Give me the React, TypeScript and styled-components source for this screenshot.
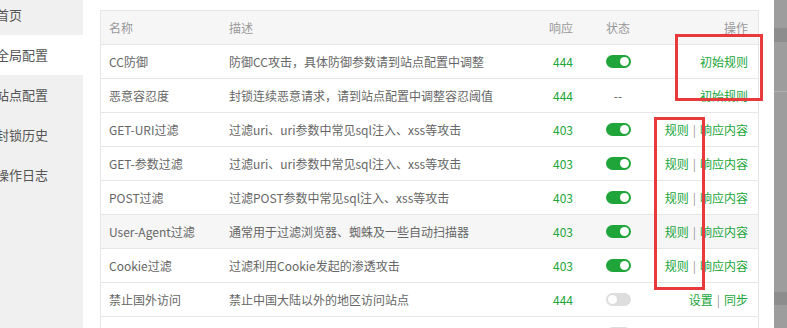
import React from 'react'
import styled, { createGlobalStyle } from 'styled-components'

const GlobalStyle = createGlobalStyle`
  html, body {
    margin: 0;
    padding: 0;
    background: #fff;
    overflow: hidden;
  }
  body {
    font-family: 'Noto Sans CJK SC', 'Noto Sans', sans-serif;
    font-size: 12px;
    color: #666;
  }
`

const green = '#20a53a'

const Page = styled.div`
  display: flex;
  width: 787px;
  height: 328px;
  overflow: hidden;
  position: relative;
`
const Sidebar = styled.ul`
  list-style: none;
  margin: 0;
  padding: 0;
  width: 83px;
  flex: none;
  background: #f0f0f0;
  padding-top: 0;
  margin-top: -5px;
`
const SideItem = styled.li<{ $active?: boolean }>`
  height: 40px;
  line-height: 40px;
  font-size: 13px;
  color: #555;
  white-space: nowrap;
  text-indent: -4px;
  background: ${(p) => (p.$active ? '#fff' : 'transparent')};
`
const Main = styled.div`
  flex: 1;
  padding: 10px 15px 0 17px;
`
const Table = styled.div`
  border: 1px solid #e6e6e6;
  border-bottom: none;
`
const Row = styled.div<{ $head?: boolean; $shade?: boolean }>`
  display: grid;
  grid-template-columns: 120px 302px 60px 70px 1fr;
  height: 33px;
  align-items: center;
  border-top: ${(p) => (p.$head ? 'none' : '1px solid #e6e6e6')};
  background: ${(p) => (p.$head || p.$shade ? '#f6f6f7' : '#fff')};
  color: ${(p) => (p.$head ? '#999' : '#666')};
  white-space: nowrap;
`
const Cell = styled.div<{ $align?: 'left' | 'right' | 'center' }>`
  padding: 0 8px;
  text-align: ${(p) => p.$align || 'left'};
  overflow: hidden;
  display: flex;
  justify-content: ${(p) =>
    p.$align === 'right' ? 'flex-end' : p.$align === 'center' ? 'center' : 'flex-start'};
`
const Code = styled(Cell)`
  color: ${green};
  padding-right: 10px;
`
const OpCell = styled(Cell)`
  padding-right: 10px;
`
const Link = styled.span`
  color: ${green};
`
const Sep = styled.span`
  color: #999;
  margin: 0 4px;
`
const Toggle = styled.span<{ $on: boolean }>`
  display: inline-block;
  position: relative;
  width: 25px;
  height: 13px;
  border-radius: 7px;
  background: ${(p) => (p.$on ? green : '#ddd')};
  &::after {
    content: '';
    position: absolute;
    top: 2px;
    left: ${(p) => (p.$on ? '14px' : '2px')};
    width: 9px;
    height: 9px;
    border-radius: 50%;
    background: #fff;
  }
`
const Mask = styled.div`
  width: 13px;
  flex: none;
  background: #9d9d9d;
  display: flex;
  flex-direction: column;
`
const MaskBand = styled.div<{ $h: number; $c: string }>`
  height: ${(p) => p.$h}px;
  background: ${(p) => p.$c};
  flex: none;
`
const Mark = styled.div<{ $x: number; $y: number; $w: number; $h: number }>`
  position: absolute;
  left: ${(p) => p.$x}px;
  top: ${(p) => p.$y}px;
  width: ${(p) => p.$w}px;
  height: ${(p) => p.$h}px;
  border: 3px solid #e8393d;
  box-sizing: border-box;
`

type Op = 'init' | 'rule' | 'set'
interface Rule {
  name: string
  desc: string
  code: string
  on: boolean | null
  op: Op
  shade?: boolean
}

const rules: Rule[] = [
  { name: 'CC防御', desc: '防御CC攻击，具体防御参数请到站点配置中调整', code: '444', on: true, op: 'init' },
  { name: '恶意容忍度', desc: '封锁连续恶意请求，请到站点配置中调整容忍阈值', code: '444', on: null, op: 'init' },
  { name: 'GET-URI过滤', desc: '过滤uri、uri参数中常见sql注入、xss等攻击', code: '403', on: true, op: 'rule' },
  { name: 'GET-参数过滤', desc: '过滤uri、uri参数中常见sql注入、xss等攻击', code: '403', on: true, op: 'rule' },
  { name: 'POST过滤', desc: '过滤POST参数中常见sql注入、xss等攻击', code: '403', on: true, op: 'rule' },
  { name: 'User-Agent过滤', desc: '通常用于过滤浏览器、蜘蛛及一些自动扫描器', code: '403', on: true, op: 'rule', shade: true },
  { name: 'Cookie过滤', desc: '过滤利用Cookie发起的渗透攻击', code: '403', on: true, op: 'rule' },
  { name: '禁止国外访问', desc: '禁止中国大陆以外的地区访问站点', code: '444', on: false, op: 'set' },
  { name: '', desc: '', code: '', on: false, op: 'set' },
]

const renderOp = (op: Op, last: boolean) => {
  if (last) return null
  if (op === 'init') return <Link>初始规则</Link>
  if (op === 'rule')
    return (
      <>
        <Link>规则</Link>
        <Sep>|</Sep>
        <Link>响应内容</Link>
      </>
    )
  return (
    <>
      <Link>设置</Link>
      <Sep>|</Sep>
      <Link>同步</Link>
    </>
  )
}

const App: React.FC = () => {
  const menu = ['首页', '全局配置', '站点配置', '封锁历史', '操作日志', '', '', '', '']
  return (
    <>
      <GlobalStyle />
      <Page>
        <Sidebar>
          {menu.map((m, i) => (
            <SideItem key={i} $active={i === 1}>
              {m}
            </SideItem>
          ))}
        </Sidebar>
        <Main>
          <Table>
            <Row $head>
              <Cell>名称</Cell>
              <Cell>描述</Cell>
              <Cell $align="right" style={{ paddingRight: 10 }}>
                响应
              </Cell>
              <Cell $align="center">状态</Cell>
              <OpCell $align="right">操作</OpCell>
            </Row>
            {rules.map((r, i) => {
              const last = i === rules.length - 1
              return (
                <Row key={i} $shade={r.shade}>
                  <Cell>{r.name}</Cell>
                  <Cell>{r.desc}</Cell>
                  <Code $align="right">{r.code}</Code>
                  <Cell $align="center">{r.on === null ? '--' : <Toggle $on={r.on} />}</Cell>
                  <OpCell $align="right">{renderOp(r.op, last)}</OpCell>
                </Row>
              )
            })}
          </Table>
        </Main>
        <Mask>
          <MaskBand $h={28} $c="#9d9d9d" />
          <MaskBand $h={14} $c="#8d8d8d" />
          <MaskBand $h={49} $c="#9d9d9d" />
          <MaskBand $h={1} $c="#b0b0b0" />
          <MaskBand $h={200} $c="#9d9d9d" />
          <MaskBand $h={13} $c="#8d8d8d" />
        </Mask>
        <Mark $x={675} $y={34} $w={88} $h={67} />
        <Mark $x={654} $y={117} $w={51} $h={173} />
      </Page>
    </>
  )
}

export default App
